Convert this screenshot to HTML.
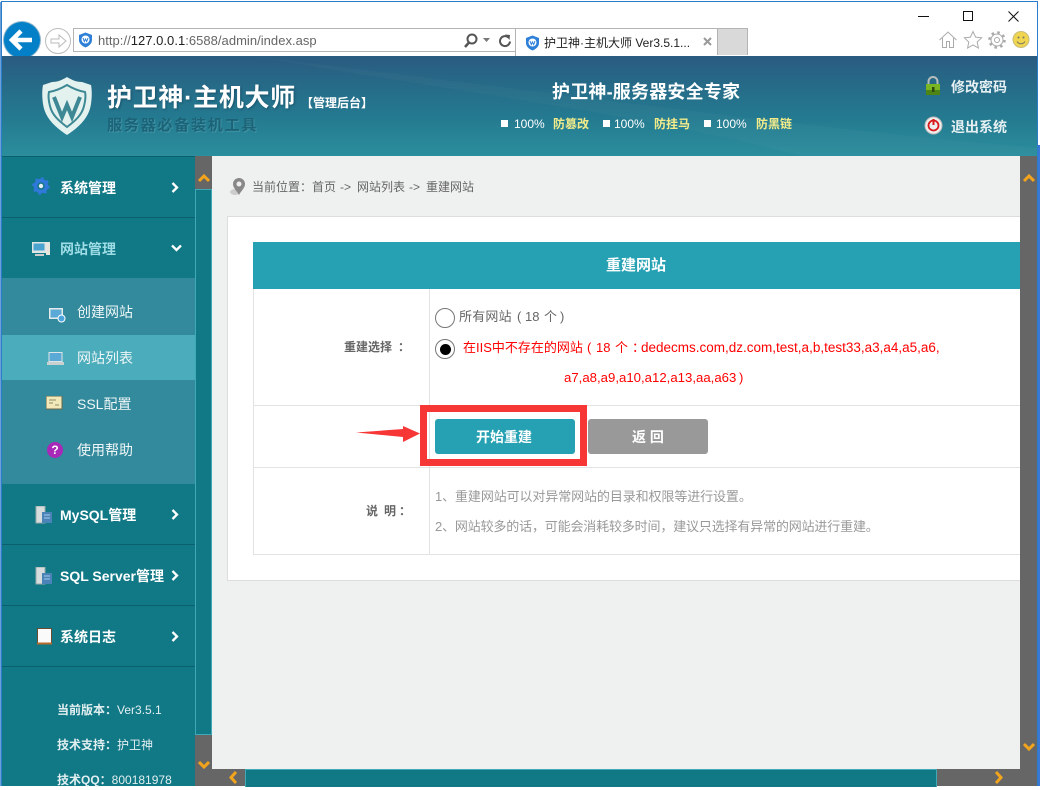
<!DOCTYPE html>
<html lang="zh"><head><meta charset="utf-8"><title>护卫神·主机大师</title>
<style>
html,body{margin:0;padding:0}
body{width:1040px;height:786px;overflow:hidden;position:relative;background:#fff;font-family:"Liberation Sans","Noto Sans CJK SC",sans-serif;font-size:13px;color:#666}
div,span.a,svg{position:absolute}
.t{white-space:nowrap;line-height:20px}
.b{font-weight:bold}
.w{color:#fff}
.n{font-size:14px}
.r{color:#f00}
.sep{left:2px;width:193px;height:1px;background:#0c5f6d}
.sq{width:7px;height:7px;background:#fff}
</style></head><body>
<!-- window frame -->
<div style="left:0;top:0;width:1040px;height:1px;background:#fff"></div>
<div style="left:1px;top:1px;width:1037px;height:1px;background:#2b7cc9"></div>
<div style="left:0;top:2px;width:1px;height:784px;background:#6a9fd8"></div>
<div style="left:1px;top:2px;width:1px;height:784px;background:#2b7cc9"></div>
<div style="left:1037px;top:1px;width:1px;height:785px;background:#2b7cc9"></div>
<div style="left:1038px;top:145px;width:2px;height:641px;background:#3a78d8"></div>

<!-- caption buttons -->
<div style="left:918px;top:16px;width:11px;height:1px;background:#111"></div>
<div style="left:963px;top:11px;width:8px;height:8px;border:1px solid #111"></div>
<svg style="left:1008px;top:11px" width="11" height="11"><path d="M.5.5l10 10M10.5.5l-10 10" stroke="#111" fill="none"/></svg>

<!-- nav buttons -->
<div style="left:4px;top:22px;width:36px;height:36px;border-radius:50%;background:#0480c8;box-shadow:0 0 0 1px #8fb5cc"></div>
<svg style="left:4px;top:22px" width="36" height="34"><path d="M7 18h21M17 9l-9 9 9 9" stroke="#fff" stroke-width="4.500" fill="none"/></svg>
<div style="left:45px;top:28px;width:24px;height:24px;border-radius:50%;border:1px solid #bbb;background:#fff"></div>
<svg style="left:45px;top:28px" width="26" height="26"><path d="M6 11h8V7l7 6-7 6v-4H6z" stroke="#bbb" fill="none"/></svg>

<!-- address bar -->
<div style="left:73px;top:28px;width:441px;height:22px;border:1px solid #b4b4b4;background:#fff"></div>
<svg style="left:78px;top:32px" width="15" height="16"><path d="M7.500.5l6.500 2.500v5c0 3.500-3 6-6.500 7.500C4 14 1 11.500 1 8V3z" fill="#2d7fd8"/><circle cx="7.500" cy="7.500" r="4" fill="#fff"/><path d="M5 6l1.300 3.500L7.500 7l1.200 2.500L10 6" stroke="#2d7fd8" fill="none"/></svg>
<div class="t" style="left:98px;top:31px;font-size:13px;color:#666;letter-spacing:.03px">http://<span style="color:#222">127.0.0.1</span>:6588/admin/index.asp</div>
<svg style="left:463px;top:33px" width="50" height="15"><circle cx="9" cy="6" r="4.500" stroke="#555" stroke-width="2" fill="none"/><path d="M6 9.500L2 14" stroke="#555" stroke-width="2.500"/><path d="M20 5h7l-3.500 4z" fill="#777"/><path d="M45.500 4.500a5 5 0 1 0 1.500 4" stroke="#555" stroke-width="2" fill="none"/><path d="M42 1.500l5 .5-.5 5z" fill="#555"/></svg>

<!-- tab -->
<div style="left:515px;top:28px;width:202px;height:27px;border-top:1px solid #b4b4b4;border-left:1px solid #b4b4b4;background:#fff"></div>
<svg style="left:525px;top:35px" width="15" height="16"><path d="M7.500.5l6.500 2.500v5c0 3.500-3 6-6.500 7.500C4 14 1 11.500 1 8V3z" fill="#2d7fd8"/><circle cx="7.500" cy="7.500" r="4" fill="#fff"/><path d="M5 6l1.300 3.500L7.500 7l1.200 2.500L10 6" stroke="#2d7fd8" fill="none"/></svg>
<div class="t" style="left:544px;top:33px;font-size:12px;color:#222">护卫神·主机大师 Ver3.5.1...</div>
<svg style="left:703px;top:37px" width="10" height="10"><path d="M1 1l7 7M8 1L1 8" stroke="#999" stroke-width="2"/></svg>
<div style="left:717px;top:28px;width:29px;height:26px;background:#d9d9d9;border:1px solid #b4b4b4;border-bottom:none"></div>

<!-- toolbar icons -->
<svg style="left:938px;top:30px" width="20" height="19"><path d="M1.500 10L10 2l8.500 8M4.500 8v9.500h4v-6h3v6h4V8" stroke="#aaa" fill="#fff"/></svg>
<svg style="left:963px;top:30px" width="20" height="19"><path d="M10 1.500l2.600 5.600 6 .7-4.400 4.200 1.200 6L10 15l-5.400 3 1.200-6L1.400 7.800l6-.7z" stroke="#aaa" fill="#fff"/></svg>
<svg style="left:988px;top:31px" width="18" height="18"><circle cx="9" cy="9" r="6" stroke="#aaa" stroke-width="1" fill="none"/><circle cx="9" cy="9" r="7.500" stroke="#aaa" stroke-width="2.500" stroke-dasharray="2.500 3.400" fill="none"/><circle cx="9" cy="9" r="2.500" stroke="#aaa" fill="none"/></svg>
<svg style="left:1012px;top:31px" width="18" height="18"><circle cx="9" cy="8.500" r="8" fill="#f0d550" stroke="#c9bc7a"/><circle cx="6.500" cy="6.500" r="1" fill="#776"/><circle cx="11.500" cy="6.500" r="1" fill="#776"/><path d="M5 10.500c2 3 6 3 8 0" stroke="#776" fill="none"/></svg>

<!-- header -->
<div style="left:2px;top:56px;width:1035px;height:100px;background:linear-gradient(180deg,#2a5b80 0%,#266b88 30%,#247a90 62%,#2b8e9c 100%);overflow:hidden">
  <svg style="left:0;top:0" width="1035" height="100"><path d="M250 0C500 30 780 70 1035 92V100H800C650 60 420 30 250 0z" fill="#fff" opacity=".025"/></svg>
</div>
<svg style="left:40px;top:76px" width="54" height="60" viewBox="0 0 54 60"><path d="M27 1c5 3 9 5 15 5l9 3c1 5 1 12 0 19-2 14-12 23-24 31C15 51 5 42 3 28 2 21 2 14 3 9l9-3c6 0 10-2 15-5z" fill="#e4f2ef"/><path d="M27 9c5 3 12 6 18 7 1 4 0 10-1 14-2 9-9 15-17 21-8-6-15-12-17-21-1-4-2-10-1-14 6-1 13-4 18-7z" fill="none" stroke="#3d8894" stroke-width="2"/><path d="M14 21l8 20 5-12 5 12 8-20" fill="none" stroke="#3d8894" stroke-width="4"/></svg>
<div class="t b w" style="left:107px;top:83px;font-size:25px;line-height:30px;letter-spacing:.7px;text-shadow:1px 1px 2px rgba(0,40,60,.4)">护卫神·主机大师</div>
<div class="t w" style="left:301px;top:93px;font-size:12px;font-weight:bold">【</div>
<div class="t w" style="left:313px;top:93px;font-size:12px;font-weight:bold">管理后台</div>
<div class="t w" style="left:361px;top:93px;font-size:12px;font-weight:bold">】</div>
<div class="t" style="left:107px;top:116px;font-size:15px;color:#1c6377;letter-spacing:1.800px;font-weight:bold;text-shadow:1px 1px 1px rgba(120,190,200,.35)">服务器必备装机工具</div>
<div class="t b w" style="left:552px;top:80px;font-size:18px;line-height:24px;letter-spacing:.2px">护卫神-服务器安全专家</div>

<div class="sq" style="left:501px;top:120px"></div>
<div class="t w" style="left:514px;top:114px;font-size:12px">100%</div>
<div class="t b" style="left:553px;top:114px;font-size:12px;color:#f4ec8a">防篡改</div>
<div class="sq" style="left:603px;top:120px"></div>
<div class="t w" style="left:614px;top:114px;font-size:12px">100%</div>
<div class="t b" style="left:654px;top:114px;font-size:12px;color:#f4ec8a">防挂马</div>
<div class="sq" style="left:704px;top:120px"></div>
<div class="t w" style="left:716px;top:114px;font-size:12px">100%</div>
<div class="t b" style="left:756px;top:114px;font-size:12px;color:#f4ec8a">防黑链</div>

<svg style="left:924px;top:75px" width="18" height="22"><path d="M4.500 10V6.500a4.500 4.500 0 0 1 9 0V10" stroke="#b5bcbc" stroke-width="2" fill="none"/><rect x="2" y="9" width="14" height="11" fill="#7ab522"/><rect x="2" y="15" width="14" height="5" fill="#4d8414"/><rect x="8" y="12" width="2.500" height="5" fill="#2f4a10"/></svg>
<div class="t b" style="left:951px;top:77px;font-size:14px;color:#e6f0f2">修改密码</div>
<svg style="left:924px;top:116px" width="19" height="19"><circle cx="9.500" cy="9.500" r="8.500" fill="#eee" stroke="#bbb"/><circle cx="9.500" cy="9.500" r="5" stroke="#d81a1a" stroke-width="1.800" fill="none"/><path d="M9.500 3v6" stroke="#d81a1a" stroke-width="2"/></svg>
<div class="t b" style="left:951px;top:117px;font-size:14px;color:#e6f0f2">退出系统</div>

<!-- sidebar -->
<div style="left:2px;top:156px;width:193px;height:630px;background:#117886"></div>
<div style="left:2px;top:156px;width:193px;height:1px;background:#0c5f6d"></div>
<div class="sep" style="top:217px"></div>
<div style="left:2px;top:278px;width:193px;height:206px;background:#338a9c"></div>
<div style="left:2px;top:335px;width:193px;height:45px;background:#4bacbb"></div>
<div class="sep" style="top:544px"></div>
<div class="sep" style="top:605px"></div>
<div class="sep" style="top:666px"></div>

<svg style="left:32px;top:177px" width="18" height="18"><circle cx="9" cy="9" r="5.500" stroke="#2f78dc" stroke-width="3.500" fill="none"/><circle cx="9" cy="9" r="7.800" stroke="#2f78dc" stroke-width="2" stroke-dasharray="2.500 3.600" fill="none"/><circle cx="9" cy="9" r="2.200" fill="#e4eef6"/></svg>
<div class="t b w n" style="left:60px;top:178px">系统管理</div>
<svg style="left:171px;top:182px" width="9" height="11"><path d="M1.500 1l4.500 4.500L1.500 10" stroke="#fff" stroke-width="2.300" fill="none"/></svg>

<svg style="left:32px;top:241px" width="18" height="16"><rect x="0" y="1" width="14" height="11" fill="#dfe6e6"/><rect x="1.500" y="2.500" width="11" height="7" fill="#4ba3cf"/><rect x="14" y="1" width="4" height="13" fill="#e6e6de"/><rect x="3" y="13" width="9" height="2" fill="#ccc"/></svg>
<div class="t b n" style="left:60px;top:239px;color:#9edde6">网站管理</div>
<svg style="left:171px;top:244px" width="11" height="9"><path d="M1 1.500l4.500 4.500L10 1.500" stroke="#fff" stroke-width="2.300" fill="none"/></svg>

<svg style="left:48px;top:307px" width="18" height="16"><rect x="1" y="1" width="14" height="11" fill="#e4eaea"/><rect x="2.500" y="2.500" width="11" height="8" fill="#5aa9d6"/><circle cx="13.500" cy="11.500" r="3.500" fill="#4ba3dc" stroke="#fff"/></svg>
<div class="t n" style="left:77px;top:302px;color:#eef6f7">创建网站</div>
<svg style="left:47px;top:351px" width="18" height="15"><rect x="1.500" y="1" width="14" height="10" fill="#dce6e8"/><rect x="2.500" y="2" width="12" height="8" fill="#5aa9d6"/><rect x="0" y="11" width="17" height="3" fill="#c8d0d0"/></svg>
<div class="t n" style="left:77px;top:348px;color:#eef6f7">网站列表</div>
<svg style="left:46px;top:396px" width="17" height="14"><rect x="0" y="0" width="16" height="13" fill="#f2e8b8" stroke="#6a6a4a"/><path d="M3 4h7M3 7h4M9 9h4" stroke="#8b8b6a"/></svg>
<div class="t n" style="left:77px;top:394px;color:#eef6f7">SSL配置</div>
<div style="left:47px;top:442px;width:16px;height:16px;border-radius:50%;background:#a828b8;color:#fff;font-weight:bold;font-size:12px;line-height:16px;text-align:center">?</div>
<div class="t n" style="left:77px;top:440px;color:#eef6f7">使用帮助</div>

<svg style="left:35px;top:506px" width="18" height="18"><rect x="1" y="0" width="9" height="17" fill="#d7dcdc" stroke="#9aa"/><rect x="7" y="6" width="10" height="11" fill="#4a83b8"/><path d="M9 9h6M9 12h6" stroke="#a8cbe6"/></svg>
<div class="t b w n" style="left:60px;top:505px">MySQL管理</div>
<svg style="left:171px;top:509px" width="9" height="11"><path d="M1.500 1l4.500 4.500L1.500 10" stroke="#fff" stroke-width="2.300" fill="none"/></svg>

<svg style="left:35px;top:567px" width="18" height="18"><rect x="1" y="0" width="9" height="17" fill="#d7dcdc" stroke="#9aa"/><rect x="7" y="6" width="10" height="11" fill="#4a83b8"/><path d="M9 9h6M9 12h6" stroke="#a8cbe6"/></svg>
<div class="t b w n" style="left:60px;top:566px">SQL Server管理</div>
<svg style="left:171px;top:570px" width="9" height="11"><path d="M1.500 1l4.500 4.500L1.500 10" stroke="#fff" stroke-width="2.300" fill="none"/></svg>

<svg style="left:37px;top:628px" width="15" height="17"><rect x=".5" y=".5" width="14" height="15" fill="#fafafa" stroke="#6a4a30"/><rect x="0" y="14.500" width="15" height="2" fill="#b86a2a"/></svg>
<div class="t b w n" style="left:60px;top:627px">系统日志</div>
<svg style="left:171px;top:631px" width="9" height="11"><path d="M1.500 1l4.500 4.500L1.500 10" stroke="#fff" stroke-width="2.300" fill="none"/></svg>

<div class="t" style="left:57px;top:700px;font-size:12px;color:#e2eff1;font-weight:bold">当前版本：<span style="font-weight:normal">Ver3.5.1</span></div>
<div class="t" style="left:57px;top:735px;font-size:12px;color:#e2eff1;font-weight:bold">技术支持：<span style="font-weight:normal">护卫神</span></div>
<div class="t" style="left:57px;top:770px;font-size:12px;color:#e2eff1;font-weight:bold">技术QQ：<span style="font-weight:normal">800181978</span></div>

<!-- left scrollbar -->
<div style="left:195px;top:156px;width:17px;height:630px;background:#666"></div>
<div style="left:195px;top:189px;width:15px;height:544px;background:#117886;border:1px solid #3fa9b8"></div>
<svg style="left:198px;top:173px" width="12" height="10"><path d="M1 8l5-5 5 5" stroke="#f2a51c" stroke-width="3" fill="none"/></svg>
<svg style="left:198px;top:760px" width="12" height="10"><path d="M1 2l5 5 5-5" stroke="#f2a51c" stroke-width="3" fill="none"/></svg>

<!-- content -->
<div style="left:212px;top:156px;width:808px;height:613px;background:#eff1f1"></div>
<svg style="left:229px;top:177px" width="18" height="20"><ellipse cx="6" cy="15" rx="5" ry="3" fill="#ccc"/><path d="M10 1a6 6 0 0 1 6 6c0 4-4 7-6 11-2-4-6-7-6-11a6 6 0 0 1 6-6z" fill="#888"/><circle cx="10" cy="7" r="2.500" fill="#eee"/></svg>
<div class="t" style="left:252px;top:177px;font-size:12px;color:#666">当前位置：首页</div>
<div class="t" style="left:340px;top:177px;font-size:12px;color:#666">-&gt;</div>
<div class="t" style="left:357px;top:177px;font-size:12px;color:#666">网站列表</div>
<div class="t" style="left:409px;top:177px;font-size:12px;color:#666">-&gt;</div>
<div class="t" style="left:426px;top:177px;font-size:12px;color:#666">重建网站</div>

<div style="left:227px;top:216px;width:793px;height:365px;background:#fff;border:1px solid #ddd;border-right:none;box-sizing:border-box"></div>
<div style="left:253px;top:242px;width:767px;height:47px;background:#25a1b3"></div>
<div class="t b w" style="left:606px;top:256px;font-size:15px">重建网站</div>

<div style="left:253px;top:289px;width:1px;height:266px;background:#e3e3e3"></div>
<div style="left:429px;top:289px;width:1px;height:266px;background:#e3e3e3"></div>
<div style="left:253px;top:405px;width:767px;height:1px;background:#e3e3e3"></div>
<div style="left:253px;top:467px;width:767px;height:1px;background:#e3e3e3"></div>
<div style="left:253px;top:554px;width:767px;height:1px;background:#e3e3e3"></div>

<div class="t b" style="left:344px;top:337px;font-size:12px;color:#666">重建选择</div>
<div class="t b" style="left:398px;top:337px;font-size:12px;color:#666">：</div>
<div style="left:435px;top:308px;width:18px;height:18px;border:1px solid #777;border-radius:50%;background:#fff"></div>
<div class="t" style="left:459px;top:307px;color:#666;letter-spacing:.2px">所有网站</div>
<div class="t" style="left:517px;top:307px;color:#666">(</div>
<div class="t" style="left:525px;top:307px;color:#666">18</div>
<div class="t" style="left:544px;top:307px;color:#666">个</div>
<div class="t" style="left:560px;top:307px;color:#666">)</div>
<div style="left:435px;top:339px;width:18px;height:18px;border:1px solid #777;border-radius:50%;background:#fff"></div>
<div style="left:439.500px;top:343.500px;width:11px;height:11px;border-radius:50%;background:#000"></div>
<div class="t r" style="left:463px;top:338px">在IIS中不存在的网站</div>
<div class="t r" style="left:587px;top:338px">(</div>
<div class="t r" style="left:596px;top:338px">18</div>
<div class="t r" style="left:615px;top:338px">个</div>
<div class="t r" style="left:632px;top:338px">：</div>
<div class="t r" style="left:641px;top:338px;font-size:13.500px">dedecms.com,dz.com,test,a,b,test33,a3,a4,a5,a6,</div>
<div class="t r" style="left:564px;top:368px;font-size:13.200px">a7,a8,a9,a10,a12,a13,aa,a63</div>
<div class="t r" style="left:739px;top:368px">)</div>

<!-- buttons -->
<div style="left:420px;top:405px;width:153px;height:47px;border:7px solid #f73636"></div>
<div style="left:435px;top:419px;width:140px;height:35px;background:#25a1b3;border-radius:3px"></div>
<div class="t b w n" style="left:476px;top:427px">开始重建</div>
<div style="left:588px;top:419px;width:120px;height:35px;background:#999;border-radius:3px"></div>
<div class="t b w n" style="left:632px;top:427px">返 回</div>
<svg style="left:356px;top:426px" width="64" height="16"><path d="M0 6.500L47 3V0l17 7.500L47 16v-5z" fill="#f73636"/></svg>

<div class="t b" style="left:366px;top:501px;font-size:12px;color:#666">说</div>
<div class="t b" style="left:384px;top:501px;font-size:12px;color:#666">明</div>
<div class="t b" style="left:399px;top:501px;font-size:12px;color:#666">：</div>
<div class="t" style="left:435px;top:487px;font-size:13px;color:#999;letter-spacing:-.1px">1、重建网站可以对异常网站的目录和权限等进行设置。</div>
<div class="t" style="left:435px;top:517px;font-size:13px;color:#999;letter-spacing:-.16px">2、网站较多的话，可能会消耗较多时间，建议只选择有异常的网站进行重建。</div>

<!-- right scrollbar -->
<div style="left:1020px;top:156px;width:17px;height:630px;background:#666"></div>
<svg style="left:1023px;top:173px" width="12" height="10"><path d="M1 8l5-5 5 5" stroke="#f2a51c" stroke-width="3" fill="none"/></svg>
<svg style="left:1023px;top:742px" width="12" height="10"><path d="M1 2l5 5 5-5" stroke="#f2a51c" stroke-width="3" fill="none"/></svg>

<!-- bottom scrollbar -->
<div style="left:212px;top:769px;width:825px;height:17px;background:#666"></div>
<div style="left:245px;top:769px;width:690px;height:17px;background:#117886;border:1px solid #3fa9b8;border-bottom:none"></div>
<svg style="left:228px;top:771px" width="11" height="13"><path d="M8 1L3 6.500 8 12" stroke="#f2a51c" stroke-width="3" fill="none"/></svg>
<svg style="left:993px;top:771px" width="11" height="13"><path d="M3 1l5 5.500L3 12" stroke="#f2a51c" stroke-width="3" fill="none"/></svg>
</body></html>
